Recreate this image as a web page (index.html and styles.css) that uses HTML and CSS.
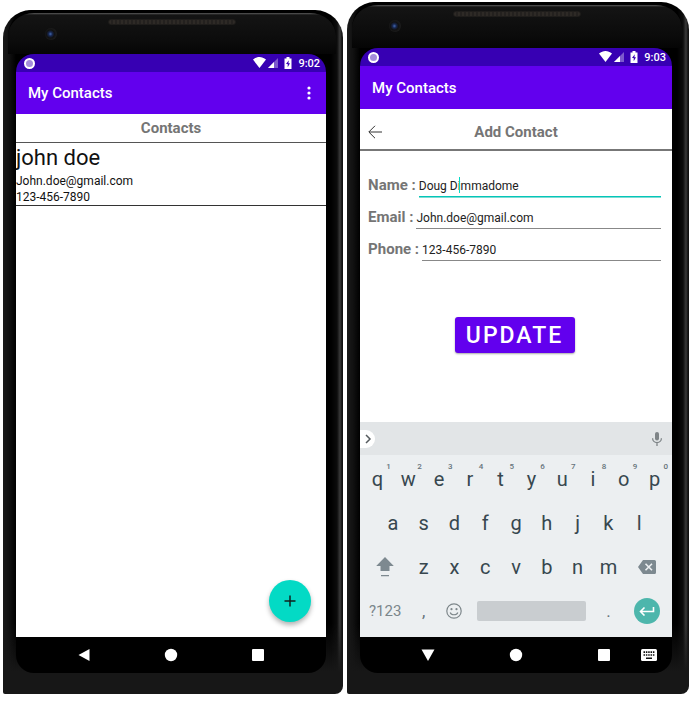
FILE: index.html
```html
<!DOCTYPE html>
<html lang="en">
<head>
<meta charset="utf-8">
<meta name="viewport" content="width=device-width, initial-scale=1">
<title>My Contacts</title>
<link rel="stylesheet" href="styles.css">
</head>
<body>
<svg class="defs" aria-hidden="true">
  <symbol id="status" viewBox="0 0 40 14">
    <path fill="#fff" d="M0 3.600C4 .2 9 .2 13 3.600L6.500 12z"/>
    <path fill="#fff" fill-opacity=".35" d="M25 2v10H15z"/>
    <path fill="#fff" d="M21 6v6h-6z"/>
    <path fill="#fff" d="M31.500 2.500h2V1h3v1.500h2V13h-7z"/>
    <path fill="#3700b3" d="M35.800 4.200 33 8h1.700v3.200L37 7.200h-1.600z"/>
  </symbol>
</svg>
<main class="stage">
  <section class="phone phone-list" aria-label="Contact list">
    <div class="bezel-top"><span class="camera"></span><span class="speaker"></span></div>
    <div class="screen">
      <div class="status"><span class="record"></span><svg class="status-icons" aria-hidden="true"><use href="#status"/></svg><time>9:02</time></div>
      <header class="appbar"><h1>My Contacts</h1>
        <button class="more" aria-label="More options"><svg width="6" height="14" viewBox="0 0 6 14"><g fill="#fff"><circle cx="3" cy="2" r="1.600"/><circle cx="3" cy="7" r="1.600"/><circle cx="3" cy="12" r="1.600"/></g></svg></button>
      </header>
      <div class="content">
        <h2 class="list-title">Contacts</h2>
        <article class="contact">
          <h3>john doe</h3>
          <p>John.doe@gmail.com</p>
          <p>123-456-7890</p>
        </article>
        <button class="fab" aria-label="Add contact"><svg width="12" height="12" viewBox="0 0 12 12"><path d="M6 .500v11M.500 6h11" stroke="#10201e" stroke-width="1.500"/></svg></button>
      </div>
      <nav class="navbar">
        <button aria-label="Back"><svg width="14" height="14" viewBox="0 0 14 14"><path fill="#fff" d="M12.500 1v12L1.500 7z"/></svg></button>
        <button aria-label="Home"><svg width="14" height="14" viewBox="0 0 14 14"><circle cx="7" cy="7" r="6.200" fill="#fff"/></svg></button>
        <button aria-label="Overview"><svg width="14" height="14" viewBox="0 0 14 14"><rect x="1" y="1" width="12" height="12" rx="1" fill="#fff"/></svg></button>
      </nav>
    </div>
  </section>

  <section class="phone phone-form" aria-label="Add contact">
    <div class="bezel-top"><span class="camera"></span><span class="speaker"></span></div>
    <div class="screen">
      <div class="status"><span class="record"></span><svg class="status-icons" aria-hidden="true"><use href="#status"/></svg><time>9:03</time></div>
      <header class="appbar"><h1>My Contacts</h1></header>
      <div class="content">
        <div class="form-title">
          <button class="back" aria-label="Go back"><svg width="14" height="14" viewBox="0 0 14 14"><path d="M14 7H1M7 .800.800 7 7 13.200" fill="none" stroke="#333" stroke-width="1"/></svg></button>
          <h2>Add Contact</h2>
        </div>
        <form class="form">
          <div class="field active"><label for="name">Name :</label><div class="entry"><input id="name" type="text" value="Doug Dimmadome"><span class="caret"></span></div></div>
          <div class="field"><label for="email">Email :</label><div class="entry"><input id="email" type="text" value="John.doe@gmail.com"></div></div>
          <div class="field"><label for="phone">Phone :</label><div class="entry"><input id="phone" type="text" value="123-456-7890"></div></div>
          <button class="update" type="button">UPDATE</button>
        </form>
      </div>
      <div class="keyboard">
        <div class="strip">
          <button class="expand" aria-label="Expand"><svg width="8" height="10" viewBox="0 0 8 10"><path d="M2 1l4 4-4 4" fill="none" stroke="#555b5e" stroke-width="1.500"/></svg></button>
          <button class="mic" aria-label="Voice input"><svg width="12" height="14" viewBox="0 0 12 14"><rect x="4" y="0" width="4" height="8.500" rx="2" fill="#7e8487"/><path d="M1.600 6.200a4.400 4.400 0 0 0 8.800 0M6 10.500V14" fill="none" stroke="#7e8487" stroke-width="1.300"/></svg></button>
        </div>
        <div class="keys">
          <button>q<sup>1</sup></button><button>w<sup>2</sup></button><button>e<sup>3</sup></button><button>r<sup>4</sup></button><button>t<sup>5</sup></button><button>y<sup>6</sup></button><button>u<sup>7</sup></button><button>i<sup>8</sup></button><button>o<sup>9</sup></button><button>p<sup>0</sup></button>
          <button class="indent">a</button><button>s</button><button>d</button><button>f</button><button>g</button><button>h</button><button>j</button><button>k</button><button>l</button>
          <button class="wide row-start" aria-label="Shift"><svg width="18" height="22" viewBox="0 0 18 22"><path fill="#7d8990" d="M9 1l8.800 9H13.500v5h-9v-5H.200zM5 19h8v1.200H5z"/></svg></button><button>z</button><button>x</button><button>c</button><button>v</button><button>b</button><button>n</button><button>m</button><button class="wide" aria-label="Delete"><svg width="18" height="14" viewBox="0 0 18 14"><path fill="#7d8990" d="M5 0h11.500A1.500 1.500 0 0 1 18 1.500v11a1.500 1.500 0 0 1-1.500 1.500H5L0 7z"/><path d="M7.500 3.700l6.500 6.600M14 3.700l-6.500 6.600" stroke="#eceff1" stroke-width="1.600"/></svg></button>
          <button class="wide symbols">?123</button><button class="minor">,</button><button aria-label="Emoji"><svg width="16" height="16" viewBox="0 0 16 16"><circle cx="8" cy="8" r="7.200" fill="none" stroke="#7e878b" stroke-width="1.200"/><circle cx="5.500" cy="6.200" r="1.100" fill="#7e878b"/><circle cx="10.500" cy="6.200" r="1.100" fill="#7e878b"/><path d="M4.200 9.500c1.200 3 6.400 3 7.600 0" fill="none" stroke="#7e878b" stroke-width="1.200"/></svg></button><button class="space" aria-label="Space"><span></span></button><button class="minor">.</button><button class="wide" aria-label="Enter"><span class="enter"><svg width="16" height="10" viewBox="0 0 16 10"><path d="M14.500 1v4.500H1.500M5.500 1.500l-4 4 4 4" fill="none" stroke="#fff" stroke-width="1.600"/></svg></span></button>
        </div>
      </div>
      <nav class="navbar">
        <button aria-label="Hide keyboard"><svg width="14" height="14" viewBox="0 0 14 14"><path fill="#fff" d="M.500 1.500h13L7 13z"/></svg></button>
        <button aria-label="Home"><svg width="14" height="14" viewBox="0 0 14 14"><circle cx="7" cy="7" r="6.200" fill="#fff"/></svg></button>
        <button aria-label="Overview"><svg width="14" height="14" viewBox="0 0 14 14"><rect x="1" y="1" width="12" height="12" rx="1" fill="#fff"/></svg></button>
        <button class="switcher" aria-label="Switch keyboard"><svg width="16" height="12" viewBox="0 0 16 12"><rect width="16" height="12" rx="1.500" fill="#fff"/><path d="M2.500 3.200h11M2.500 6h11" stroke="#111" stroke-width="1.700" stroke-dasharray="1.500 .850"/><path d="M5 9.300h6" stroke="#111" stroke-width="1.500"/></svg></button>
      </nav>
    </div>
  </section>
</main>
</body>
</html>
```

FILE: styles.css
```css
* { box-sizing: border-box; }

body {
  margin: 0;
  background: #fff;
  font-family: Roboto, "Liberation Sans", sans-serif;
}

h1, h2, h3, p { margin: 0; }

button {
  padding: 0;
  border: 0;
  background: none;
  color: inherit;
  font: inherit;
}

svg { display: block; }

.defs { position: absolute; width: 0; height: 0; }

.stage {
  display: flex;
  gap: 4px;
  min-height: 100vh;
  padding: 2px 9px 10px 3px;
}

/* Handset */
.phone {
  display: flex;
  flex: 340 1 0;
  flex-direction: column;
  padding: 0 17px 21px 13px;
  border-radius: 28px 28px 8px 2px;
  background:
    linear-gradient(transparent calc(100% - 70px), #171717 calc(100% - 22px)),
    linear-gradient(90deg, #1a1a1a 0, #111 6px, #000 13px, #000 calc(100% - 12px), #0c0c0c calc(100% - 6px), #3a3a3a calc(100% - 3px), #111 calc(100% - 1px));
}

.phone-list { margin-top: 8px; }
.phone-form { flex-grow: 342; }

.bezel-top {
  position: relative;
  flex: none;
  height: 44px;
  margin: 0 -10px 0 -8px;
  border-top: 3px solid #000;
  border-radius: 26px 26px 0 0;
  background: linear-gradient(#5a5a5a 0, #141414 2px, #0b0b0b 30px, #050505 100%);
}

.phone-form .bezel-top { height: 46px; }

.camera {
  position: absolute;
  top: 15px;
  left: 37px;
  width: 12px;
  height: 12px;
  border-radius: 50%;
  background: radial-gradient(circle at 45% 50%, #4267b0 0, #17264d 2px, #111 4px, #1b1b1b 6px);
}

.speaker {
  position: absolute;
  top: 6px;
  left: calc(50% - 64px);
  width: 128px;
  height: 6px;
  border: 1px solid #1f1d1b;
  border-radius: 3px;
  background: repeating-linear-gradient(90deg, #2e2a26 0 2px, #24211f 2px 4px);
}

.screen {
  display: flex;
  flex: 1;
  flex-direction: column;
  overflow: hidden;
  border-radius: 18px;
}

.status {
  display: flex;
  flex: none;
  align-items: center;
  height: 18px;
  padding: 0 6px 0 8px;
  background: #3700b3;
  color: #fff;
  font-size: 11px;
  font-weight: 500;
}

.record {
  width: 11px;
  height: 11px;
  border: 2px solid #fff;
  border-radius: 50%;
  background: #a58ddb;
}

.status-icons { width: 40px; height: 14px; margin: 0 5px 0 auto; }

.appbar {
  display: flex;
  flex: none;
  align-items: center;
  justify-content: space-between;
  height: 42px;
  padding: 0 14px 0 12px;
  background: #6200ee;
  color: #fff;
}

.phone-form .appbar { height: 43px; }

.appbar h1 { font-size: 15px; font-weight: 500; }

.content {
  position: relative;
  display: flex;
  flex: 1;
  flex-direction: column;
  background: #fff;
}

h2 { color: #757575; font-size: 15px; font-weight: 700; }

/* Contact list */
.list-title {
  height: 29px;
  border-bottom: 1px solid #555;
  line-height: 29px;
  text-align: center;
}

.contact {
  border-bottom: 1px solid #333;
  color: #111;
  font-size: 12px;
  line-height: 16px;
}

.contact h3 { font-size: 22px; font-weight: 400; line-height: 30px; }

.fab {
  position: absolute;
  right: 15px;
  bottom: 15px;
  display: grid;
  width: 42px;
  height: 42px;
  place-items: center;
  border-radius: 50%;
  background: #03dac5;
  box-shadow: 0 3px 5px rgba(0, 0, 0, .3);
}

/* Contact form */
.form-title {
  display: grid;
  grid-template-columns: 14px 1fr 14px;
  align-items: center;
  height: 42px;
  padding: 6px 8px 0;
  border-bottom: 2px solid #777;
  text-align: center;
}

.form { padding: 18px 11px 0 8px; }

.field { display: flex; align-items: center; height: 32px; }

.field label { color: #757575; font-size: 15px; font-weight: 700; }

.entry {
  position: relative;
  flex: 1;
  min-width: 0;
  margin: 2px 0 0 3px;
  border-bottom: 1px solid #888;
}

.entry input {
  display: block;
  width: 100%;
  height: 21px;
  padding: 0;
  border: 0;
  outline: 0;
  background: none;
  color: #222;
  font: 12px/20px Roboto, "Liberation Sans", sans-serif;
}

.active .entry { border-color: #03c6b8; box-shadow: 0 1px #7fdcd5; }

.caret {
  position: absolute;
  top: 2px;
  left: 40px;
  width: 1px;
  height: 16px;
  background: #03dac5;
}

.update {
  display: block;
  width: 120px;
  height: 36px;
  margin: 52px auto 0;
  border-radius: 3px;
  background: #6200ee;
  box-shadow: 0 1px 2px rgba(0, 0, 0, .35);
  color: #fff;
  font-size: 23px;
  font-weight: 500;
  letter-spacing: 2px;
}

/* On-screen keyboard */
.keyboard { flex: none; background: #eceff1; color: #37474f; }

.strip {
  display: flex;
  align-items: center;
  justify-content: space-between;
  height: 33px;
  padding-right: 9px;
  background: #e2e5e7;
}

.expand {
  display: grid;
  width: 15px;
  height: 18px;
  place-items: center;
  border-radius: 0 9px 9px 0;
  background: #fff;
}

.keys {
  display: grid;
  grid-template-columns: repeat(20, 1fr);
  grid-auto-rows: 44px;
  padding: 2px 2px 4px;
  font-size: 20px;
}

.keys button {
  position: relative;
  display: grid;
  grid-column: span 2;
  place-items: center;
}

.keys .indent { grid-column: 2 / span 2; }
.keys .wide { grid-column: span 3; }
.keys .row-start { grid-column: 1 / span 3; }
.keys .space { grid-column: span 8; }

.keys sup {
  position: absolute;
  top: 5px;
  right: 2px;
  color: #65727a;
  font-size: 8px;
  font-weight: 500;
  line-height: 10px;
}

.keys .symbols { color: #7b868b; font-size: 15px; }
.keys .minor { color: #66737a; font-size: 17px; }

.space span {
  width: calc(100% - 14px);
  height: 20px;
  border-radius: 2px;
  background: #c9cdd0;
}

.enter {
  display: grid;
  width: 26px;
  height: 26px;
  place-items: center;
  border-radius: 50%;
  background: #4db6ac;
}

/* System navigation */
.navbar {
  position: relative;
  display: flex;
  flex: none;
  align-items: center;
  justify-content: space-between;
  height: 36px;
  padding: 0 61px;
  background: #000;
}

.switcher { position: absolute; right: 15px; }
```
